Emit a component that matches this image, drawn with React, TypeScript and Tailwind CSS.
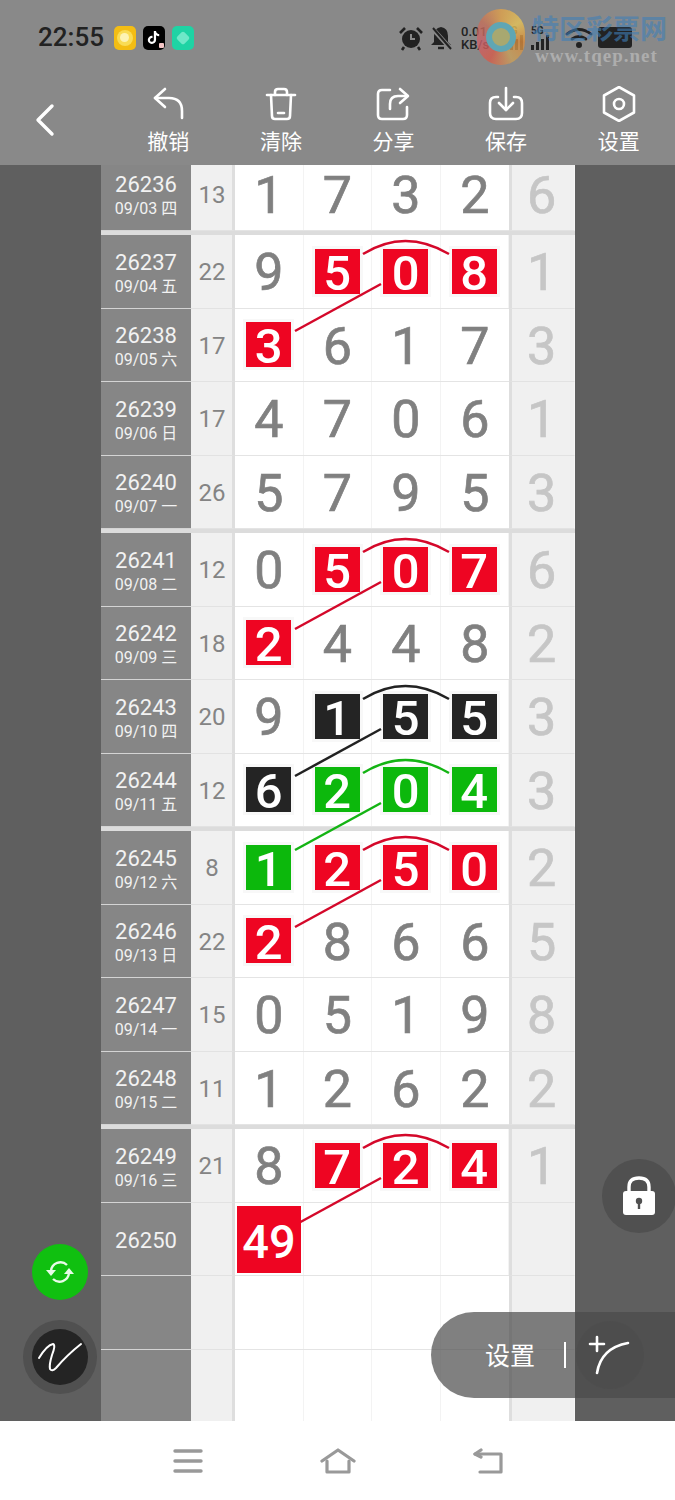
import { FaTiktok } from "react-icons/fa";

type Row = {
  id: string;
  date?: string;
  sum?: string;
  digits?: string;
  // r = red, k = black, g = green, - = plain
  marks?: string;
  extra?: string;
  link?: string;
};

const groups: Row[][] = [
  [{ id: "26236", date: "09/03 四", sum: "13", digits: "1732", marks: "----", extra: "6" }],
  [
    { id: "26237", date: "09/04 五", sum: "22", digits: "9508", marks: "-rrr", extra: "1", link: "#d4082a" },
    { id: "26238", date: "09/05 六", sum: "17", digits: "3617", marks: "r---", extra: "3" },
    { id: "26239", date: "09/06 日", sum: "17", digits: "4706", marks: "----", extra: "1" },
    { id: "26240", date: "09/07 一", sum: "26", digits: "5795", marks: "----", extra: "3" },
  ],
  [
    { id: "26241", date: "09/08 二", sum: "12", digits: "0507", marks: "-rrr", extra: "6", link: "#d4082a" },
    { id: "26242", date: "09/09 三", sum: "18", digits: "2448", marks: "r---", extra: "2" },
    { id: "26243", date: "09/10 四", sum: "20", digits: "9155", marks: "-kkk", extra: "3", link: "#222222" },
    { id: "26244", date: "09/11 五", sum: "12", digits: "6204", marks: "kggg", extra: "3", link: "#14b414" },
  ],
  [
    { id: "26245", date: "09/12 六", sum: "8", digits: "1250", marks: "grrr", extra: "2", link: "#d4082a" },
    { id: "26246", date: "09/13 日", sum: "22", digits: "2866", marks: "r---", extra: "5" },
    { id: "26247", date: "09/14 一", sum: "15", digits: "0519", marks: "----", extra: "8" },
    { id: "26248", date: "09/15 二", sum: "11", digits: "1262", marks: "----", extra: "2" },
  ],
  [
    { id: "26249", date: "09/16 三", sum: "21", digits: "8724", marks: "-rrr", extra: "1", link: "#d4082a" },
    { id: "26250" },
    { id: "" },
    { id: "" },
  ],
];

function Cell({ digit, mark }: { digit: string; mark: string }) {
  if (mark === "-")
    return <span className="pt-[4px] text-[52px] leading-none text-[#808080] [-webkit-text-stroke:0.7px]">{digit}</span>;
  const bg = mark === "r" ? "bg-[#ee0522]" : mark === "k" ? "bg-[#242424]" : "bg-[#0cb80c]";
  return (
    <span
      className={`relative flex h-[45px] w-[45px] items-center justify-center pt-[4px] text-[49px] leading-none font-medium text-white shadow-[0_0_0_3px_#f8f8f8] ${bg}`}
    >
      {digit}
    </span>
  );
}

function Link({ color }: { color: string }) {
  return (
    <svg width="274" height="110" className="absolute top-0 left-0 z-10 overflow-visible" fill="none">
      <path d="M128 19 Q170 -7 214 19" stroke={color} strokeWidth="2.5" />
      <path d="M146 49 L60 96" stroke={color} strokeWidth="2.5" />
    </svg>
  );
}

function TableRow({ row }: { row: Row }) {
  const cols = [0, 1, 2, 3];
  return (
    <div className="flex h-[73.5px]">
      <div className="flex w-[90px] flex-col items-center justify-center border-b border-[#d4d4d4] bg-[#868686] pt-[4px] text-[#f2f2f2]">
        <span className="text-[22px] leading-[26px]">{row.id}</span>
        {row.date && <span className="text-[16px] leading-[21px]">{row.date}</span>}
      </div>
      <div className="flex w-[44px] items-center justify-center border-r-[3px] border-b border-r-[#dedede] border-b-[#e2e2e2] bg-[#f0f0f0] pt-[2px] pl-[1px] text-[24px] text-[#848484]">
        {row.sum}
      </div>
      <div className="relative grid w-[274px] grid-cols-4 border-b border-[#e4e4e4] bg-white">
        {cols.map((i) => (
          <div
            key={i}
            className="flex items-center justify-center border-r border-[#f3f3f3] last:border-r-0"
          >
            {row.digits && <Cell digit={row.digits[i]} mark={row.marks![i]} />}
          </div>
        ))}
        {row.link && <Link color={row.link} />}
        {row.id === "26250" && (
          <span className="absolute top-[3px] left-[2px] z-20 flex h-[67px] w-[64px] items-center justify-center bg-[#ee0522] pt-[4px] text-[47px] leading-none font-medium text-white">
            49
          </span>
        )}
      </div>
      <div className="flex w-[66px] items-center justify-center border-r border-b border-l-[3px] border-r-[#f5f5f5] border-b-[#e2e2e2] border-l-[#dedede] bg-[#f0f0f0] pt-[4px] pr-[3px] text-[52px] leading-none text-[#c6c6c6] [-webkit-text-stroke:0.7px]">
        {row.extra}
      </div>
    </div>
  );
}

function ToolButton({ label, children }: { label: string; children: React.ReactNode }) {
  return (
    <div className="flex w-[112.6px] flex-col items-center">
      <svg
        width="36"
        height="36"
        viewBox="0 0 36 36"
        fill="none"
        stroke="white"
        strokeWidth="2.6"
        strokeLinecap="round"
        strokeLinejoin="round"
      >
        {children}
      </svg>
      <span className="mt-[6px] text-[21px] leading-[28px] text-white">{label}</span>
    </div>
  );
}

function Signal() {
  return (
    <span className="relative flex h-[24px] w-[26px] items-end gap-[2px]">
      <span className="absolute top-0 left-0 text-[10px] leading-[10px] font-bold">5G</span>
      <span className="h-[5px] w-[3px] bg-[#222222]" />
      <span className="h-[8px] w-[3px] bg-[#222222]" />
      <span className="h-[11px] w-[3px] bg-[#222222]" />
      <span className="h-[15px] w-[3px] bg-[#222222]" />
    </span>
  );
}

function StatusBar() {
  return (
    <div className="relative flex h-[75px] items-center pl-[38px]">
      <span className="text-[26px] font-medium text-[#222222]">22:55</span>
      <div className="ml-[10px] flex items-center gap-[7px]">
        <span className="flex h-[24px] w-[22px] items-center justify-center rounded-[5px] bg-[#f3bd14]">
          <span className="flex h-[16px] w-[16px] items-center justify-center rounded-full bg-[#f9dc55]">
            <span className="h-[9px] w-[9px] rounded-full bg-[#fdf3b4]" />
          </span>
        </span>
        <span className="relative flex h-[24px] w-[22px] items-center justify-center rounded-[5px] bg-black text-white">
          <FaTiktok size={13} />
          <span className="absolute right-[1px] bottom-[2px] h-[5px] w-[5px] rounded-[1px] bg-[#f4c6c6]" />
        </span>
        <span className="flex h-[24px] w-[22px] items-center justify-center rounded-[5px] bg-[#1fd3a4]">
          <span className="h-[10px] w-[10px] rotate-45 rounded-[2px] bg-[#6fe8c8]" />
        </span>
      </div>
      <div className="ml-auto flex items-center pr-[43px] text-[#222222]">
        <svg width="26" height="26" viewBox="0 0 26 26" fill="none">
          <circle cx="13" cy="14" r="9" fill="#222222" />
          <path d="M13 9 V14 H17" stroke="#898989" strokeWidth="2" />
          <path d="M2 8 L7 3 M24 8 L19 3 M6 22 L4 25 M20 22 L22 25" stroke="#222222" strokeWidth="2.6" />
        </svg>
        <svg width="24" height="26" viewBox="0 0 24 26" fill="none" className="ml-[5px]">
          <path d="M12 2 Q5 3 5 11 V17 L2 20 H22 L19 17 V11 Q19 3 12 2 Z" fill="#222222" />
          <path d="M9 23 H15" stroke="#222222" strokeWidth="2.4" />
          <path d="M3 3 L21 23" stroke="#898989" strokeWidth="4.5" />
          <path d="M4 3 L22 24" stroke="#222222" strokeWidth="2" />
        </svg>
        <span className="ml-[8px] w-[44px] text-[13px] leading-[13px] font-medium">
          0.01
          <br />
          KB/s
        </span>
        <Signal />
        <Signal />
        <svg width="28" height="20" viewBox="0 0 28 20" fill="none" stroke="#222222" strokeWidth="2.8" strokeLinecap="round" className="ml-[8px]">
          <path d="M2 6 Q14 -3 26 6" />
          <path d="M7 11 Q14 6 21 11" />
          <circle cx="14" cy="17" r="1.6" fill="#222222" />
        </svg>
        <span className="ml-[5px] h-[21px] w-[34px] rounded-[3px] bg-[#222222]" />
      </div>
      {/* site watermark sits over the status icons */}
      <span className="absolute top-[9px] left-[477px] h-[56px] w-[48px] rounded-full bg-[conic-gradient(#e0a24a,#e6c458,#d98a3c,#c9a05a,#d65b4a,#c9606a,#c4705a,#e0a24a)] opacity-80" />
      <span className="absolute top-[22px] left-[486px] h-[30px] w-[30px] rounded-full border-[6px] border-[#5fa6b4] bg-[#a8a870]" />
      <span className="absolute top-[12px] left-[532px] text-[27px] leading-[36px] font-bold text-[#3f7fb8]/60">
        特区彩票网
      </span>
      <span className="absolute top-[44px] left-[535px] font-['Liberation_Serif',serif] text-[19px] leading-[24px] font-bold tracking-[1px] text-[#adadad]">
        www.tqep.net
      </span>
    </div>
  );
}

function Toolbar() {
  return (
    <div className="flex h-[90px] items-start pt-[11px]">
      <div className="flex w-[112px] pt-[17px] pl-[35px]">
        <svg width="20" height="34" viewBox="0 0 20 34" fill="none" stroke="white" strokeWidth="3.4" strokeLinecap="round" strokeLinejoin="round">
          <path d="M17 3 L3 17 L17 31" />
        </svg>
      </div>
      <ToolButton label="撤销">
        <path d="M15 3 L5 12 L15 21" />
        <path d="M5 12 H19 Q32 12 32 25 V32" />
      </ToolButton>
      <ToolButton label="清除">
        <path d="M4 9 H32" />
        <path d="M12 9 V6 Q12 3 15 3 H21 Q24 3 24 6 V9" />
        <path d="M8 9 L9 30 Q9 33 12 33 H24 Q27 33 27 30 L28 9" />
        <path d="M15 27 H21" />
      </ToolButton>
      <ToolButton label="分享">
        <path d="M15 4 H7 Q3 4 3 8 V29 Q3 33 7 33 H28 Q32 33 32 29 V21" />
        <path d="M25 3 L33 10 L25 17" />
        <path d="M32 10 H23 Q15 10 15 18 V23" />
      </ToolButton>
      <ToolButton label="保存">
        <path d="M10 11 H8 Q2 11 2 17 V27 Q2 33 8 33 H28 Q34 33 34 27 V17 Q34 11 28 11 H26" />
        <path d="M18 2 V24" />
        <path d="M11 17 L18 24 L25 17" />
      </ToolButton>
      <ToolButton label="设置">
        <path d="M18 1 L33 9.5 V26.5 L18 35 L3 26.5 V9.5 Z" />
        <circle cx="18" cy="18" r="5" />
      </ToolButton>
    </div>
  );
}

export default function App() {
  return (
    <div className="flex h-[1500px] w-full flex-col font-['Roboto','Noto_Sans_CJK_SC',sans-serif]">
      <header className="h-[165px] bg-[#898989]">
        <StatusBar />
        <Toolbar />
      </header>

      <main className="relative h-[1256px] overflow-hidden bg-[#5f5f5f] pl-[101px]">
        <div className="-mt-[7.5px] flex w-[474px] flex-col gap-[4px] bg-[#dcdcdc]">
          {groups.map((g, i) => (
            <div key={i}>
              {g.map((r, j) => (
                <TableRow key={j} row={r} />
              ))}
            </div>
          ))}
        </div>

        {/* floating controls */}
        <button className="absolute top-[1079px] left-[32px] flex h-[56px] w-[56px] items-center justify-center rounded-full bg-[#10c010]">
          <svg width="30" height="26" viewBox="0 0 30 26" fill="none" stroke="#e8fbe8" strokeWidth="2.4">
            <path d="M6 12 A9.5 9.5 0 0 1 22 6" />
            <path d="M24 14 A9.5 9.5 0 0 1 8 20" />
            <path d="M1 11 H11 L6 17 Z" fill="#e8fbe8" stroke="none" />
            <path d="M19 15 H29 L24 9 Z" fill="#e8fbe8" stroke="none" />
          </svg>
        </button>
        <div className="absolute top-[1155px] left-[23px] flex h-[74px] w-[74px] items-center justify-center rounded-full bg-[#505050]">
          <div className="flex h-[56px] w-[56px] items-center justify-center rounded-full bg-[#242424]">
            <svg width="46" height="32" viewBox="0 0 46 32" fill="none" stroke="white" strokeWidth="2" strokeLinecap="round" strokeLinejoin="round">
              <path d="M2 17 Q10 4 16 3 Q19 4 15 14 Q12 24 13 28 Q15 31 19 27 Q30 14 44 3" />
            </svg>
          </div>
        </div>
        <div className="absolute top-[994px] left-[602px] flex h-[74px] w-[74px] items-center justify-center rounded-full bg-[#505050]">
          <svg width="36" height="42" viewBox="0 0 36 42" fill="none">
            <path d="M8 17 V12 Q8 3 18 3 Q28 3 28 12 V17" stroke="white" strokeWidth="3.4" />
            <rect x="2" y="16" width="32" height="24" rx="3" fill="white" />
            <circle cx="18" cy="26" r="3.2" fill="#505050" />
            <rect x="16.8" y="27" width="2.4" height="7" fill="#505050" />
          </svg>
        </div>
        <div className="absolute top-[1147px] left-[431px] flex h-[86px] w-[244px] items-center rounded-l-[43px] bg-[#4a4a4a]/70 pl-[54px] text-white">
          <span className="pt-[3px] text-[25px] leading-none">设置</span>
          <span className="ml-[29px] h-[26px] w-[2px] bg-white" />
          <span className="ml-[10px] flex h-[68px] w-[68px] items-center justify-center rounded-full bg-[#4a4a4a]/30">
            <svg width="44" height="44" viewBox="0 0 44 44" fill="none" stroke="white" strokeWidth="2.6" strokeLinecap="round">
              <path d="M2 11 H16 M9 4 V18" />
              <path d="M9 40 Q13 15 40 10" />
            </svg>
          </span>
        </div>
      </main>

      <nav className="flex h-[79px] items-center justify-center bg-white">
        <div className="flex w-[150px] justify-center">
          <svg width="30" height="26" viewBox="0 0 30 26" fill="none" stroke="#999999" strokeWidth="3.4" strokeLinecap="round">
            <path d="M2 3 H28 M2 13 H28 M2 23 H28" />
          </svg>
        </div>
        <div className="flex w-[150px] justify-center">
          <svg width="36" height="26" viewBox="0 0 36 26" fill="none" stroke="#999999" strokeWidth="3.2" strokeLinecap="round" strokeLinejoin="round">
            <path d="M2 13 L18 2 L34 13" />
            <path d="M7 13 V24 H29 V13" />
          </svg>
        </div>
        <div className="flex w-[150px] justify-center">
          <svg width="32" height="26" viewBox="0 0 32 26" fill="none" stroke="#999999" strokeWidth="3.2" strokeLinecap="round" strokeLinejoin="round">
            <path d="M9 2 L3 6 L9 9" />
            <path d="M3 6 H29 V24 H8" />
          </svg>
        </div>
      </nav>
    </div>
  );
}
